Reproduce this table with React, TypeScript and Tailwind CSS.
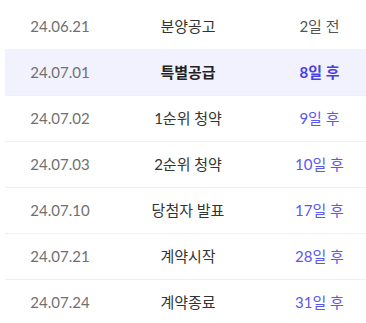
const rows = [
  { date: '24.06.21', label: '분양공고', dday: '2일 전', past: true },
  { date: '24.07.01', label: '특별공급', dday: '8일 후', active: true },
  { date: '24.07.02', label: '1순위 청약', dday: '9일 후' },
  { date: '24.07.03', label: '2순위 청약', dday: '10일 후' },
  { date: '24.07.10', label: '당첨자 발표', dday: '17일 후' },
  { date: '24.07.21', label: '계약시작', dday: '28일 후' },
  { date: '24.07.24', label: '계약종료', dday: '31일 후' },
];

export default function App() {
  return (
    <div className="w-[366px] h-[323px] overflow-hidden bg-white font-['Lato','Noto_Sans_CJK_KR',sans-serif] text-[15px]">
      <div className="ml-[5px] mt-[3px]">
        {rows.map((row, i) => (
          <div
            key={i}
            className={`grid grid-cols-[110px_146px_1fr] items-center h-[46px] ${
              row.active ? 'bg-[#f1f2fe]' : ''
            } ${i > 1 ? 'border-t border-[#f0f0f0]' : ''}`}
          >
            <span className="text-center text-[#707070]">{row.date}</span>
            <span className={`text-center ${row.active ? 'font-bold text-[#222]' : 'text-[#333]'}`}>
              {row.label}
            </span>
            <span
              className={`text-center pl-[12px] ${
                row.past ? 'text-[#555]' : row.active ? 'font-bold text-[#4a3fe6]' : 'text-[#5b57f2]'
              }`}
            >
              {row.dday}
            </span>
          </div>
        ))}
      </div>
    </div>
  );
}
